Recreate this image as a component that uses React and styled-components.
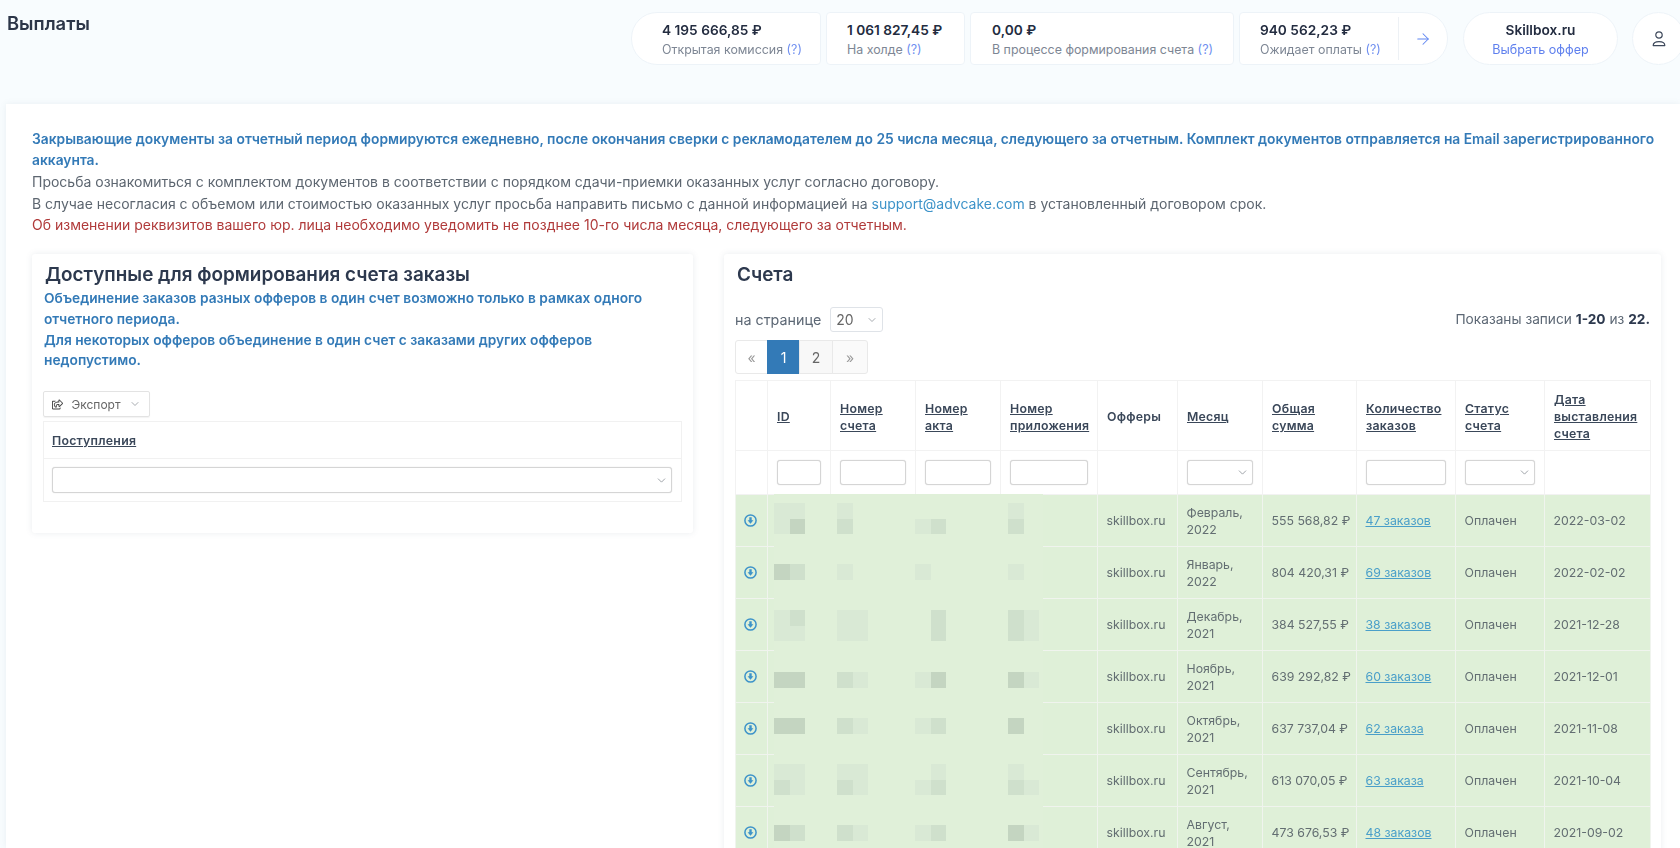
import React from 'react';
import styled, { createGlobalStyle } from 'styled-components';
import { ArrowRight, ChevronDown } from 'lucide-react';
import { FaRegShareSquare } from 'react-icons/fa';

const GlobalStyle = createGlobalStyle`
  html, body {
    margin: 0;
    height: 848px;
    overflow: hidden;
    background: #f8fcfe;
    font-family: Inter, "Noto Sans", "Liberation Sans", sans-serif;
    color: #5d6875;
  }
  * { box-sizing: border-box; }
`;

const stats = [
  { value: '4 195 666,85 ₽', label: 'Открытая комиссия', width: 190, padding: 30, $round: 'left' },
  { value: '1 061 827,45 ₽', label: 'На холде', width: 139, padding: 20 },
  { value: '0,00 ₽', label: 'В процессе формирования счета', width: 264, padding: 21 },
];

// tiles of the mosaic over hidden numbers: 0 - none, 1..3 - how dark
const hiddenRows = [
  { top: 9, tiles: [[1, 1, 1, 3], [1, 0, 2, 0], [0, 0, 1, 2], [1, 0, 2, 0]] },
  { top: 18, tiles: [[3, 2, 0, 0], [1, 0, 0, 0], [1, 0, 0, 0], [1, 0, 0, 0]] },
  { top: 12, tiles: [[1, 2, 1, 1], [1, 1, 1, 1], [0, 2, 0, 2], [2, 1, 2, 1]] },
  { top: 22, tiles: [[3, 3, 0, 0], [2, 1, 0, 0], [1, 3, 0, 0], [3, 1, 0, 0]] },
  { top: 16, tiles: [[3, 3, 0, 0], [2, 1, 0, 0], [1, 2, 0, 0], [3, 0, 0, 0]] },
  { top: 10, tiles: [[1, 1, 2, 1], [1, 1, 2, 1], [0, 1, 1, 2], [1, 0, 2, 1]] },
  { top: 19, tiles: [[3, 2, 0, 0], [2, 1, 0, 0], [1, 2, 0, 0], [3, 1, 0, 0]] },
];

const invoices = [
  { month: 'Февраль,', year: '2022', sum: '555 568,82 ₽', orders: '47 заказов', date: '2022-03-02' },
  { month: 'Январь,', year: '2022', sum: '804 420,31 ₽', orders: '69 заказов', date: '2022-02-02' },
  { month: 'Декабрь,', year: '2021', sum: '384 527,55 ₽', orders: '38 заказов', date: '2021-12-28' },
  { month: 'Ноябрь,', year: '2021', sum: '639 292,82 ₽', orders: '60 заказов', date: '2021-12-01' },
  { month: 'Октябрь,', year: '2021', sum: '637 737,04 ₽', orders: '62 заказа', date: '2021-11-08' },
  { month: 'Сентябрь,', year: '2021', sum: '613 070,05 ₽', orders: '63 заказа', date: '2021-10-04' },
  { month: 'Август,', year: '2021', sum: '473 676,53 ₽', orders: '48 заказов', date: '2021-09-02' },
];

const columns = [32, 63, 85, 85, 97, 80, 85, 94, 99, 89, 106];

const DownloadIcon = () => (
  <svg width="13" height="13" viewBox="0 0 13 13">
    <circle cx="6.5" cy="6.5" r="5.6" fill="none" stroke="#3d93c9" strokeWidth="1.5" />
    <path d="M5.3 3.2h2.4v3h1.7L6.5 9.8 3.6 6.2h1.7z" fill="#3d93c9" />
  </svg>
);

const UserIcon = () => (
  <svg width="16" height="18" viewBox="0 0 16 18" fill="none" stroke="#3f4a5c" strokeWidth="1.2">
    <circle cx="8" cy="5" r="3.2" />
    <path d="M2.2 15.6c0-2.6 2-4 5.8-4s5.8 1.4 5.8 4z" strokeLinejoin="round" />
  </svg>
);

const Select = ({ small }) => (
  <SelectBox $small={small}>
    <ChevronDown size={13} strokeWidth={1.5} color="#8a8f96" />
  </SelectBox>
);

export default function App() {
  return (
    <Page>
      <GlobalStyle />
      <Header>
        <PageTitle>Выплаты</PageTitle>
        <Stats>
          {stats.map((s) => (
            <StatCard key={s.label} $width={s.width} $padding={s.padding} $round={s.$round}>
              <StatValue>{s.value}</StatValue>
              <StatLabel>{s.label} <Hint>(?)</Hint></StatLabel>
            </StatCard>
          ))}
          <StatCard $width={209} $padding={20} $round="right">
            <StatBody>
              <StatValue>940 562,23 ₽</StatValue>
              <StatLabel>Ожидает оплаты <Hint>(?)</Hint></StatLabel>
            </StatBody>
            <StatArrow><ArrowRight size={18} strokeWidth={1.4} color="#5f86f2" /></StatArrow>
          </StatCard>
        </Stats>
        <OfferCard>
          <StatValue>Skillbox.ru</StatValue>
          <OfferLink>Выбрать оффер</OfferLink>
        </OfferCard>
        <UserButton><UserIcon /></UserButton>
      </Header>

      <Main>
        <Notes>
          <NoteStrong>
            Закрывающие документы за отчетный период формируются ежедневно, после окончания сверки с рекламодателем до 25 числа месяца, следующего за отчетным. Комплект документов отправляется на Email зарегистрированного аккаунта.
          </NoteStrong>
          <Note>Просьба ознакомиться с комплектом документов в соответствии с порядком сдачи-приемки оказанных услуг согласно договору.</Note>
          <Note>В случае несогласия с объемом или стоимостью оказанных услуг просьба направить письмо с данной информацией на <MailLink>support@advcake.com</MailLink> в установленный договором срок.</Note>
          <NoteWarn>Об изменении реквизитов вашего юр. лица необходимо уведомить не позднее 10-го числа месяца, следующего за отчетным.</NoteWarn>
        </Notes>

        <Columns>
          <LeftCard>
            <CardTitle>Доступные для формирования счета заказы</CardTitle>
            <CardHint>
              Объединение заказов разных офферов в один счет возможно только в рамках одного отчетного периода.
              <br />
              Для некоторых офферов объединение в один счет с заказами других офферов недопустимо.
            </CardHint>
            <ExportButton>
              <FaRegShareSquare size={11} color="#444" />
              Экспорт
              <ChevronDown size={12} strokeWidth={1.5} color="#8a8f96" />
            </ExportButton>
            <IncomeTable>
              <IncomeHead><SortLink>Поступления</SortLink></IncomeHead>
              <IncomeBody><Select /></IncomeBody>
            </IncomeTable>
          </LeftCard>

          <RightCard>
            <RightTitle>Счета</RightTitle>
            <Toolbar>
              <PerPage>
                на странице
                <PerPageSelect>20<ChevronDown size={12} strokeWidth={1.5} color="#8a8f96" /></PerPageSelect>
              </PerPage>
              <Summary>Показаны записи <b>1-20</b> из <b>22.</b></Summary>
            </Toolbar>
            <Pager>
              <PageItem $width={33} $muted>«</PageItem>
              <PageItem $width={33} $active>1</PageItem>
              <PageItem $width={34}>2</PageItem>
              <PageItem $width={36} $muted>»</PageItem>
            </Pager>
            <Table>
              <colgroup>
                {columns.map((w, i) => <col key={i} width={w} />)}
              </colgroup>
              <thead>
                <tr>
                  <HeadCell />
                  <HeadCell><SortLink>ID</SortLink></HeadCell>
                  <HeadCell><SortLink>Номер<br />счета</SortLink></HeadCell>
                  <HeadCell><SortLink>Номер<br />акта</SortLink></HeadCell>
                  <HeadCell><SortLink>Номер<br />приложения</SortLink></HeadCell>
                  <HeadCell>Офферы</HeadCell>
                  <HeadCell><SortLink>Месяц</SortLink></HeadCell>
                  <HeadCell><SortLink>Общая<br />сумма</SortLink></HeadCell>
                  <HeadCell><SortLink>Количество<br />заказов</SortLink></HeadCell>
                  <HeadCell><SortLink>Статус<br />счета</SortLink></HeadCell>
                  <HeadCell><SortLink>Дата<br />выставления<br />счета</SortLink></HeadCell>
                </tr>
                <tr>
                  <FilterCell />
                  <FilterCell><FilterInput /></FilterCell>
                  <FilterCell><FilterInput /></FilterCell>
                  <FilterCell><FilterInput /></FilterCell>
                  <FilterCell><FilterInput /></FilterCell>
                  <FilterCell />
                  <FilterCell><Select small /></FilterCell>
                  <FilterCell />
                  <FilterCell><FilterInput /></FilterCell>
                  <FilterCell><Select small /></FilterCell>
                  <FilterCell />
                </tr>
              </thead>
              <tbody>
                {invoices.map((row, i) => (
                  <tr key={row.date}>
                    <IconCell>
                      <DownloadIcon />
                      <Redaction $top={hiddenRows[i].top}>
                        {hiddenRows[i].tiles.map((group, g) => (
                          <TileGroup key={g} $index={g}>
                            {group.map((shade, t) => <Tile key={t} $shade={shade} />)}
                          </TileGroup>
                        ))}
                      </Redaction>
                    </IconCell>
                    <DataCell />
                    <DataCell />
                    <DataCell />
                    <DataCell />
                    <DataCell>skillbox.ru</DataCell>
                    <DataCell>{row.month}<br />{row.year}</DataCell>
                    <DataCell>{row.sum}</DataCell>
                    <DataCell><OrdersLink>{row.orders}</OrdersLink></DataCell>
                    <DataCell>Оплачен</DataCell>
                    <DataCell>{row.date}</DataCell>
                  </tr>
                ))}
              </tbody>
            </Table>
          </RightCard>
        </Columns>
      </Main>
    </Page>
  );
}

const Page = styled.div`
  width: 1680px;
  height: 848px;
  overflow: hidden;
  filter: blur(0.4px);
`;

const Header = styled.header`
  display: flex;
  align-items: flex-start;
  height: 104px;
  padding: 12px 0 0 7px;
`;

const PageTitle = styled.h1`
  margin: 0 auto 0 0;
  font-size: 18.4px;
  line-height: 22px;
  font-weight: 600;
  color: #2c3648;
`;

const Stats = styled.div`
  display: flex;
  gap: 5px;
`;

const StatCard = styled.div`
  display: flex;
  flex-direction: column;
  justify-content: center;
  position: relative;
  width: ${(p) => p.$width}px;
  height: 53px;
  padding-left: ${(p) => p.$padding}px;
  background: #fff;
  border: 1px solid #edf3f8;
  border-radius: ${(p) => (p.$round === 'left' ? '26px 4px 4px 26px' : p.$round === 'right' ? '4px 26px 26px 4px' : '4px')};
`;

const StatBody = styled.div`
  display: flex;
  flex-direction: column;
`;

const StatArrow = styled.div`
  position: absolute;
  right: 0;
  top: 4px;
  bottom: 4px;
  width: 49px;
  display: flex;
  align-items: center;
  justify-content: center;
  border-left: 1px solid #edf1f5;
`;

const StatValue = styled.div`
  font-size: 13.7px;
  line-height: 19px;
  font-weight: 600;
  color: #232c40;
`;

const StatLabel = styled.div`
  margin-top: 2px;
  font-size: 12.4px;
  line-height: 15px;
  color: #7d8694;
  white-space: nowrap;
`;

const Hint = styled.span`
  color: #6f8ff0;
`;

const OfferCard = styled.div`
  display: flex;
  flex-direction: column;
  align-items: center;
  justify-content: center;
  width: 155px;
  height: 53px;
  margin-left: 15px;
  background: #fff;
  border: 1px solid #edf3f8;
  border-radius: 27px;
`;

const OfferLink = styled.div`
  margin-top: 2px;
  font-size: 12.6px;
  line-height: 15px;
  color: #5f80ee;
`;

const UserButton = styled.div`
  display: flex;
  align-items: center;
  justify-content: center;
  flex: none;
  width: 53px;
  height: 53px;
  margin: 0 -5px 0 14px;
  background: #fff;
  border: 1px solid #edf3f8;
  border-radius: 50%;
`;

const Main = styled.main`
  height: 744px;
  margin-left: 6px;
  padding: 25px 19px 0 26px;
  background: #fff;
  box-shadow: 0 0 6px rgba(120, 140, 160, 0.12);
`;

const Notes = styled.div`
  font-size: 14px;
  line-height: 21.2px;
`;

const NoteStrong = styled.div`
  font-size: 13.8px;
  font-weight: 600;
  color: #337ab7;
`;

const Note = styled.div`
  color: #5d6670;
`;

const MailLink = styled.span`
  color: #3d93c9;
`;

const NoteWarn = styled.div`
  color: #b03a3a;
`;

const Columns = styled.div`
  display: flex;
  align-items: flex-start;
  gap: 31px;
  margin-top: 19px;
`;

const LeftCard = styled.section`
  width: 661px;
  height: 279px;
  padding: 9px 11px 0 11px;
  background: #fff;
  box-shadow: 0 0 6px rgba(90, 110, 130, 0.13);
  border-radius: 3px;
`;

const CardTitle = styled.h2`
  margin: 0 0 0 2px;
  font-size: 18.9px;
  line-height: 24px;
  font-weight: 600;
  color: #2d394e;
`;

const CardHint = styled.div`
  margin: 1px 0 0 1px;
  width: 610px;
  font-size: 13.75px;
  line-height: 20.8px;
  font-weight: 600;
  color: #337ab7;
`;

const ExportButton = styled.div`
  display: inline-flex;
  align-items: center;
  gap: 8.5px;
  height: 26px;
  margin-top: 20px;
  padding: 0 8px;
  font-size: 12px;
  color: #666;
  border: 1px solid #e3e3e3;
  border-radius: 2px;
  box-shadow: 0 1px 1px rgba(0, 0, 0, 0.05);
`;

const IncomeTable = styled.div`
  margin-top: 4px;
  border: 1px solid #f1f1f1;
`;

const IncomeHead = styled.div`
  display: flex;
  align-items: center;
  height: 37px;
  padding-left: 8px;
  border-bottom: 1px solid #f1f1f1;
`;

const IncomeBody = styled.div`
  display: flex;
  align-items: center;
  height: 42px;
  padding: 0 9px 0 8px;
`;

const SelectBox = styled.div`
  display: flex;
  align-items: center;
  justify-content: flex-end;
  width: 100%;
  height: ${(p) => (p.$small ? 25 : 26)}px;
  padding-right: 3px;
  background: #fff;
  border: 1px solid #d5d5d5;
  border-radius: 3px;
  box-shadow: 0 0 1px rgba(0, 0, 0, 0.2);
`;

const RightCard = styled.section`
  flex: none;
  width: 937px;
  padding: 9px 11px 0 11px;
  background: #fff;
  box-shadow: 0 0 6px rgba(90, 110, 130, 0.13);
  border-radius: 3px;
`;

const RightTitle = styled.h2`
  margin: 0 0 0 2px;
  font-size: 18.9px;
  line-height: 24px;
  font-weight: 600;
  color: #2d394e;
`;

const Toolbar = styled.div`
  display: flex;
  justify-content: space-between;
  margin-top: 20px;
`;

const PerPage = styled.div`
  display: flex;
  align-items: center;
  gap: 9px;
  height: 25px;
  font-size: 14.3px;
  color: #5d6875;
`;

const PerPageSelect = styled.div`
  display: flex;
  align-items: center;
  justify-content: space-between;
  width: 53px;
  height: 25px;
  padding: 0 4px 0 5px;
  font-size: 14px;
  color: #666;
  border: 1px solid #dfe3e8;
  border-radius: 3px;
`;

const Summary = styled.div`
  margin-top: 4px;
  font-size: 13.7px;
  line-height: 17px;
  color: #5d6875;

  b {
    font-weight: 700;
    color: #2d394e;
  }
`;

const Pager = styled.div`
  display: flex;
  margin-top: 8px;
  height: 34px;
`;

const PageItem = styled.div`
  display: flex;
  align-items: center;
  justify-content: center;
  width: ${(p) => p.$width}px;
  font-size: 14px;
  color: ${(p) => (p.$active ? '#fff' : p.$muted ? '#9a9a9a' : '#666')};
  background: ${(p) => (p.$active ? '#337ab7' : p.$muted ? '#fafafa' : '#f8f8f8')};
  border: 1px solid ${(p) => (p.$active ? '#337ab7' : '#e9e9e9')};
  margin-left: -1px;

  &:first-child {
    margin-left: 0;
    background: #fff;
    border-radius: 3px 0 0 3px;
  }

  &:last-child {
    border-radius: 0 3px 3px 0;
  }
`;

const Table = styled.table`
  margin-top: 6px;
  width: 915px;
  table-layout: fixed;
  border-collapse: collapse;
`;

const HeadCell = styled.th`
  height: 70px;
  padding: 2px 2px 0 9px;
  font-size: 12.3px;
  line-height: 17px;
  font-weight: 600;
  letter-spacing: 0.25px;
  text-align: left;
  color: #3a4759;
  white-space: nowrap;
  border: 1px solid #f2f2f2;
`;

const SortLink = styled.span`
  font-size: 12.3px;
  font-weight: 600;
  letter-spacing: 0.25px;
  color: #3a4759;
  text-decoration: underline;
`;

const FilterCell = styled.td`
  height: 44px;
  padding: 0 9px;
  border: 1px solid #f2f2f2;
`;

const FilterInput = styled.div`
  height: 25px;
  background: #fff;
  border: 1px solid #d5d5d5;
  border-radius: 3px;
  box-shadow: 0 0 1px rgba(0, 0, 0, 0.2);
`;

const DataCell = styled.td`
  height: 52px;
  padding: 0 2px 0 8.5px;
  font-size: 12.3px;
  line-height: 17px;
  color: #636e72;
  background: #dff0d8;
  border: 1px solid #f0f4ee;
  white-space: nowrap;
`;

const IconCell = styled(DataCell)`
  position: relative;
  padding: 3px 0 0 7.5px;
`;

const OrdersLink = styled.span`
  color: #4a9fc9;
  text-decoration: underline;
`;

const Redaction = styled.div`
  position: absolute;
  top: -1px;
  bottom: -1px;
  left: 38px;
  width: 269px;
  padding-top: ${(p) => p.$top}px;
  display: grid;
  grid-template-columns: 31px 32px 31px 47px 31px 62px 31px;
  background: #e0f0d9;
`;

const TileGroup = styled.div`
  grid-column: ${(p) => p.$index * 2 + 1};
  grid-row: 1;
  display: grid;
  grid-template-columns: 15.5px 15.5px;
  grid-auto-rows: 15.5px;
  align-content: start;
`;

const tileColors = ['transparent', '#d9e9d5', '#cfe0cc', '#c4d5c1'];

const Tile = styled.div`
  background: ${(p) => tileColors[p.$shade]};
`;
